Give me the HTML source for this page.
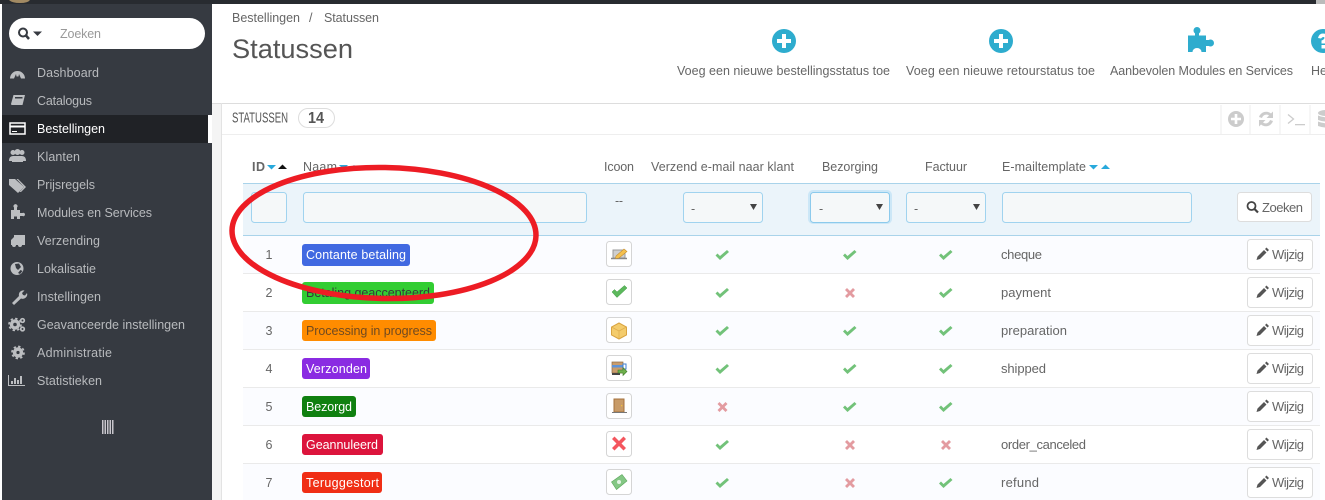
<!DOCTYPE html>
<html><head><meta charset="utf-8"><title>Statussen</title>
<style>
html,body{margin:0;padding:0;background:#fff;width:1325px;height:500px;overflow:hidden}
svg{display:block}
text{font-family:"Liberation Sans",sans-serif;font-size:12.5px;fill:#666}
.s text{fill:#b8babd}
.l text{fill:#fff;font-size:12.5px}
.b{font-size:13px}
</style></head><body>
<svg width="1325" height="500" viewBox="0 0 1325 500" xmlns="http://www.w3.org/2000/svg">
<defs>
<path id="ck" d="M-7 0.5L-5 -1.5L-2.5 1L4.500 -5L6.500 -3L-2.5 5Z" fill="#72c279"/>
<path id="xx" d="M-5 -3L-3 -5L0 -2L3 -5L5 -3L2 0L5 3L3 5L0 2L-3 5L-5 3L-2 0Z" fill="#e39ba0"/>
<g id="wz"><rect x="0.5" y="0.5" width="65" height="30" rx="3" fill="#fff" stroke="#ddd"/>
<path d="M9.500 21L10.500 17.500L17 11L19.500 13.500L13 20ZM18 10L19.500 8.500L22 11L20.500 12.500Z" fill="#555"/>
<text x="25" y="20" textLength="32" lengthAdjust="spacing" class="b" style="fill:#666">Wijzig</text></g>
<rect id="ib" x="0.5" y="0.5" width="25" height="25" rx="3" fill="#fff" stroke="#d5d5d5"/>
</defs>

<!-- top bar and sidebar -->
<rect x="0" y="0" width="1316" height="4" fill="#282b30"/>
<rect x="1316" y="0" width="9" height="4" fill="#bbb"/>
<path d="M9 0H30Q28 3 20 3Q12 3 9 0Z" fill="#a28a63"/>
<rect x="2" y="4" width="210" height="496" fill="#363a41"/>
<rect x="0" y="0" width="2" height="500" fill="#fff"/>
<rect x="0" y="0" width="2" height="4" fill="#282b30"/>

<rect x="9" y="18" width="196" height="31" rx="15.500" fill="#fff"/>
<circle cx="23" cy="32.500" r="4" fill="none" stroke="#363a41" stroke-width="2"/>
<path d="M26 35.500L29 39" stroke="#363a41" stroke-width="2.500"/>
<path d="M33 31.500H42L37.500 36Z" fill="#363a41"/>
<text x="60" y="38" textLength="41" style="fill:#999">Zoeken</text>

<rect x="2" y="115" width="206" height="28" fill="#202226"/>
<rect x="208" y="115" width="4" height="28" fill="#fff"/>

<g class="s">
<text x="37" y="77" textLength="62">Dashboard</text>
<text x="37" y="105" textLength="55">Catalogus</text>
<text x="37" y="133" textLength="68" style="fill:#fff">Bestellingen</text>
<text x="37" y="161" textLength="43">Klanten</text>
<text x="37" y="189" textLength="58">Prijsregels</text>
<text x="37" y="217" textLength="115">Modules en Services</text>
<text x="37" y="245" textLength="63">Verzending</text>
<text x="37" y="273" textLength="59">Lokalisatie</text>
<text x="37" y="301" textLength="64">Instellingen</text>
<text x="37" y="329" textLength="148">Geavanceerde instellingen</text>
<text x="37" y="357" textLength="75">Administratie</text>
<text x="37" y="385" textLength="65">Statistieken</text>
</g>

<!-- sidebar icons -->
<g fill="#bcbec1">
<path d="M10 78.500A7.500 7.500 0 1 1 25 78.500L21 78.500L19 74L18.500 76.500L16.500 76.500L16 74L14 78.500Z"/>
<path d="M13 66.500h1.500v2h-1.500zM17 65.500h1.500v2h-1.500zM21 66.500h1.500v2h-1.500z" fill="#363a41"/>
<path d="M13.500 95H25L22.500 105H11.500L11 104ZM15 97V98.500H22.500V97Z"/>
<rect x="10" y="123" width="15" height="11" fill="none" stroke="#fff" stroke-width="1.500"/>
<rect x="10" y="125.500" width="15" height="2" fill="#fff"/>
<rect x="12" y="131" width="5" height="1" fill="#fff"/>
<circle cx="13" cy="152.500" r="2.500"/><circle cx="22" cy="152.500" r="2.500"/><circle cx="17.500" cy="152" r="3"/>
<path d="M9 161Q9 156 13 156H22Q26 156 26 161H23V162H12V161Z"/>
<path d="M9 179H15L24 187L18 193L9 185Z"/>
<path d="M18 179L26 187L21 192L19.500 192L24 187L16.500 179Z"/>
<path d="M11 210H14V207.500A2 2 0 1 1 17 207.500V210H20V213H22.500A1.700 1.700 0 1 1 22.500 216H20V219H17V216.500H14V219H11Z"/>
<path d="M14 235H25V245H22A2 2 0 0 1 18 245H16A2 2 0 0 1 12 245H11V240L14 237Z"/>
<circle cx="17" cy="268.500" r="6.500"/>
<path d="M15 264L19 263.500L21 267L18 270L16 268Z" fill="#363a41"/>
<path d="M18 273L20.500 270L22.500 271L20 274Z" fill="#363a41"/>
<path d="M12 303L19 296A4.500 4.500 0 0 1 24.500 290.500L22 293L23 295L25 295.500L27 293A4.500 4.500 0 0 1 21 298.500L14 305Z"/>
<circle cx="15" cy="324.500" r="3.500" fill="none" stroke="#bcbec1" stroke-width="3.400"/>
<circle cx="15" cy="324.500" r="6" fill="none" stroke="#bcbec1" stroke-width="1.600" stroke-dasharray="2.400 2.300"/>
<circle cx="22.500" cy="320.500" r="1.800" fill="none" stroke="#bcbec1" stroke-width="1.700"/>
<circle cx="22.500" cy="329" r="1.800" fill="none" stroke="#bcbec1" stroke-width="1.700"/>
<circle cx="18" cy="352.500" r="3.400" fill="none" stroke="#bcbec1" stroke-width="3.600"/>
<circle cx="18" cy="352.500" r="6" fill="none" stroke="#bcbec1" stroke-width="1.700" stroke-dasharray="2.400 2.300"/>
<path d="M8 375H9V385H25V386H8Z"/>
<path d="M11 381h2v3h-2zM14 378h2v6h-2zM17 380h2v4h-2zM20 376h2v8h-2z"/>
</g>
<path d="M102 420h1.500v14h-1.500zM104.500 420h1.500v14h-1.500zM107 420h1.500v14h-1.500zM109.500 420h1.500v14h-1.500zM112 420h1.500v14h-1.500z" fill="#c8c5cc"/>

<!-- page background below header -->
<rect x="212" y="103" width="1113" height="397" fill="#f4f4f4"/>
<rect x="221" y="103" width="1104" height="397" fill="#fff"/>
<rect x="212" y="103" width="1113" height="1" fill="#ddd"/>
<rect x="221" y="103" width="1" height="397" fill="#e3e3e3"/>

<!-- page header -->
<text x="232" y="22" textLength="68">Bestellingen</text>
<text x="309" y="22">/</text>
<text x="324" y="22" textLength="55">Statussen</text>
<text x="232" y="58" textLength="121" lengthAdjust="spacingAndGlyphs" style="font-size:27px;fill:#555">Statussen</text>

<circle cx="784" cy="41" r="12" fill="#2eacce"/>
<path d="M782 34h4v5h5v4h-5v5h-4v-5h-5v-4h5z" fill="#fff"/>
<circle cx="1001" cy="41" r="12" fill="#2eacce"/>
<path d="M999 34h4v5h5v4h-5v5h-4v-5h-5v-4h5z" fill="#fff"/>
<g fill="#2eacce">
<path d="M1188 35.500H1195V30H1199V35.500H1206V40H1209V46H1206V52H1201.500A4.500 4 0 0 0 1192.500 52H1188Z"/>
<circle cx="1197" cy="30.500" r="3.500"/><circle cx="1210.500" cy="43" r="3.500"/>
</g>
<circle cx="1323" cy="41" r="12" fill="#2eacce"/>
<path d="M1318 38Q1319 33.500 1323 33.500Q1328 33.500 1328 37.500Q1328 40 1325 41.500V43.500H1321.500V40.500Q1324.500 39.500 1324.500 37.500Q1323 36 1321 38.500ZM1321.500 45H1325V48.500H1321.500Z" fill="#fff"/>
<text x="677" y="75" textLength="213">Voeg een nieuwe bestellingsstatus toe</text>
<text x="906" y="75" textLength="189">Voeg een nieuwe retourstatus toe</text>
<text x="1110" y="75" textLength="183">Aanbevolen Modules en Services</text>
<text x="1311" y="75" textLength="16">He</text>

<!-- panel header -->
<text x="232" y="122.500" textLength="56" lengthAdjust="spacingAndGlyphs" style="font-size:14.500px;fill:#555">STATUSSEN</text>
<rect x="298.500" y="108.500" width="36" height="19" rx="9.500" fill="#fff" stroke="#ddd"/>
<text x="308" y="123" textLength="16" lengthAdjust="spacingAndGlyphs" style="font-size:15.500px;font-weight:bold;fill:#555">14</text>
<rect x="222" y="134" width="1103" height="1" fill="#eee"/>
<path d="M1221 105v29M1250 105v29M1280 105v29M1310 105v29" stroke="#eee" stroke-width="1"/>
<circle cx="1236" cy="119" r="8" fill="#ccc"/>
<path d="M1234.700 114h2.600v3.700h3.700v2.600h-3.700v3.700h-2.600v-3.700h-3.700v-2.600h3.700z" fill="#fff"/>
<path d="M1259 117A7.500 7.500 0 0 1 1271 113.500L1273 111.500V118H1266.500L1269 115.500A4.500 4.500 0 0 0 1262 118ZM1273 121A7.500 7.500 0 0 1 1261 124.500L1259 126.500V120H1265.500L1263 122.500A4.500 4.500 0 0 0 1270 120Z" fill="#ccc"/>
<path d="M1288 114.500L1293.500 119L1288 123.500" fill="none" stroke="#ccc" stroke-width="1.300"/>
<rect x="1295" y="124" width="10" height="1.300" fill="#ccc"/>
<ellipse cx="1326" cy="113" rx="8" ry="3" fill="#ccc"/>
<path d="M1318 115.500Q1326 119 1334 115.500V120Q1326 123 1318 120ZM1318 121.500Q1326 125 1334 121.500V126Q1326 129 1318 126Z" fill="#ccc"/>

<!-- table header -->
<text x="252" y="171" textLength="13" style="font-weight:bold;fill:#666">ID</text>
<path d="M267 165h9l-4.500 4.500z" fill="#28a9dc"/>
<path d="M278 169h9l-4.500-4.500z" fill="#111"/>
<text x="303" y="171" textLength="34">Naam</text>
<path d="M339 165h9l-4.500 4.500z" fill="#28a9dc"/>
<path d="M350 169h8l-4-4z" fill="#28a9dc"/>
<text x="604" y="171" textLength="30">Icoon</text>
<text x="651" y="171" textLength="143">Verzend e-mail naar klant</text>
<text x="822" y="171" textLength="56">Bezorging</text>
<text x="925" y="171" textLength="42">Factuur</text>
<text x="1002" y="171" textLength="84">E-mailtemplate</text>
<path d="M1089 165h9l-4.500 4.500z" fill="#28a9dc"/>
<path d="M1101 169h9l-4.500-4.500z" fill="#28a9dc"/>

<!-- filter row -->
<rect x="243" y="183" width="1077" height="53" fill="#ebf4fa"/>
<rect x="243" y="183" width="1077" height="1" fill="#a9d3ea"/>
<rect x="243" y="235" width="1077" height="1" fill="#a9d3ea"/>
<g fill="#f5f8f9" stroke="#a0d3ef">
<rect x="251.500" y="192.500" width="35" height="30" rx="3"/>
<rect x="303.500" y="192.500" width="283" height="30" rx="3"/>
<rect x="683.500" y="192.500" width="79" height="30" rx="3"/>
<rect x="906.500" y="192.500" width="79" height="30" rx="3"/>
<rect x="1002.500" y="192.500" width="189" height="30" rx="3"/>
</g>
<rect x="808" y="190" width="84" height="34" rx="5" fill="#bfe1f5" opacity=".7"/>
<rect x="810.500" y="192.500" width="79" height="30" rx="3" fill="#f5f8f9" stroke="#8ccaec"/>
<text x="615" y="205" textLength="8">--</text>
<text x="691" y="213">-</text><text x="819" y="213">-</text><text x="914" y="213">-</text>
<path d="M750 204h7l-3.500 6zM876 204h7l-3.500 6zM973 204h7l-3.500 6z" fill="#444"/>
<rect x="1237.500" y="192.500" width="74" height="29" rx="3" fill="#fff" stroke="#ddd"/>
<circle cx="1251.500" cy="206" r="4" fill="none" stroke="#444" stroke-width="1.800"/>
<path d="M1254.500 209L1258 212.500" stroke="#444" stroke-width="2.200"/>
<text x="1262" y="212" textLength="41" class="b">Zoeken</text>

<!-- rows -->
<rect x="243" y="236" width="1077" height="37" fill="#fbfcff"/>
<rect x="243" y="312" width="1077" height="37" fill="#fbfcff"/>
<rect x="243" y="388" width="1077" height="37" fill="#fbfcff"/>
<rect x="243" y="464" width="1077" height="36" fill="#fbfcff"/>
<path d="M243 273.500H1320M243 311.500H1320M243 349.500H1320M243 387.500H1320M243 425.500H1320M243 463.500H1320" stroke="#eaeaea"/>

<g text-anchor="middle">
<text x="269" y="259">1</text><text x="269" y="297">2</text><text x="269" y="335">3</text><text x="269" y="373">4</text><text x="269" y="411">5</text><text x="269" y="449">6</text><text x="269" y="487">7</text>
</g>

<rect x="302" y="244" width="108" height="22" rx="3" fill="#4169e1"/>
<rect x="302" y="282" width="132" height="22" rx="3" fill="#32cd32"/>
<rect x="302" y="320" width="134" height="21" rx="3" fill="#ff8c00"/>
<rect x="302" y="358" width="68" height="21" rx="3" fill="#8a2be2"/>
<rect x="302" y="396" width="54" height="21" rx="3" fill="#108010"/>
<rect x="302" y="434" width="81" height="21" rx="3" fill="#dc143c"/>
<rect x="302" y="472" width="80" height="21" rx="3" fill="#f02e15"/>
<g class="l">
<text x="306" y="259" textLength="100">Contante betaling</text>
<text x="306" y="297" textLength="124" style="fill:#383838">Betaling geaccepteerd</text>
<text x="306" y="335" textLength="126" style="fill:#704a20">Processing in progress</text>
<text x="306" y="373" textLength="61">Verzonden</text>
<text x="306" y="411" textLength="46">Bezorgd</text>
<text x="306" y="449" textLength="72">Geannuleerd</text>
<text x="306" y="487" textLength="73">Teruggestort</text>
</g>

<!-- status icons -->
<use href="#ib" x="606" y="241"/><use href="#ib" x="606" y="279"/><use href="#ib" x="606" y="317"/><use href="#ib" x="606" y="355"/><use href="#ib" x="606" y="393"/><use href="#ib" x="606" y="431"/><use href="#ib" x="606" y="469"/>
<path d="M613 250H625V258H613Z" fill="#cfcfcf" stroke="#999"/><path d="M611 258.500H627" stroke="#888" stroke-width="1.500"/>
<path d="M616 256L624 249L627 251.500L619 258L615.500 258.500Z" fill="#f4c04e" stroke="#c98f2b" stroke-width=".6"/>
<path d="M612 292L614.500 289.500L617 292L624.500 285.500L627 288L617 297.500Z" fill="#5cb85c" stroke="#3e9a43" stroke-width=".5"/>
<path d="M619 323L626.500 327V335L619 339L611.500 335V327Z" fill="#f4cc6c" stroke="#d9a441"/><path d="M611.500 327L619 331L626.500 327M619 331V339" fill="none" stroke="#e0ae4e" stroke-width=".8"/>
<rect x="612" y="362" width="11" height="11" fill="#c99c6c" stroke="#8a6a44" stroke-width=".7"/><rect x="612" y="365" width="11" height="2.500" fill="#5e93d8"/>
<path d="M623 364H626V369H623Z" fill="#fff" stroke="#3f7fd1"/><rect x="612" y="373" width="8" height="2" fill="#444"/>
<path d="M618 370H623V367.500L627 371.500L623 375.500V373H618Z" fill="#6fb04c" stroke="#3d7b2a" stroke-width=".6"/>
<rect x="614" y="399" width="10" height="13" fill="#c89b68" stroke="#a5713d"/><rect x="621" y="405" width="1.300" height="1.300" fill="#f0c040"/><path d="M612 412.500H627" stroke="#777"/>
<path d="M612 439L614.500 436.500L619 441L623.500 436.500L626 439L621.500 443.500L626 448L623.500 450.500L619 446L614.500 450.500L612 448L616.500 443.500Z" fill="#f4565e"/>
<path d="M611.500 482L622 474.500L627 481L616.500 489.500Z" fill="#84c784" stroke="#5ba65b" stroke-width=".6"/><circle cx="619" cy="482" r="2" fill="#e3f3e3"/>

<!-- check columns -->
<use href="#ck" x="722.500" y="255"/><use href="#ck" x="850" y="255"/><use href="#ck" x="946" y="255"/>
<use href="#ck" x="722.500" y="293"/><use href="#xx" x="850" y="293"/><use href="#ck" x="946" y="293"/>
<use href="#ck" x="722.500" y="331"/><use href="#ck" x="850" y="331"/><use href="#ck" x="946" y="331"/>
<use href="#ck" x="722.500" y="369"/><use href="#ck" x="850" y="369"/><use href="#ck" x="946" y="369"/>
<use href="#xx" x="722.500" y="407"/><use href="#ck" x="850" y="407"/><use href="#ck" x="946" y="407"/>
<use href="#ck" x="722.500" y="445"/><use href="#xx" x="850" y="445"/><use href="#xx" x="946" y="445"/>
<use href="#ck" x="722.500" y="483"/><use href="#xx" x="850" y="483"/><use href="#ck" x="946" y="483"/>

<text x="1001" y="259" textLength="41" class="b">cheque</text>
<text x="1001" y="297" textLength="50" class="b">payment</text>
<text x="1001" y="335" textLength="66" class="b">preparation</text>
<text x="1001" y="373" textLength="45" class="b">shipped</text>
<text x="1001" y="449" textLength="85" class="b">order_canceled</text>
<text x="1001" y="487" textLength="38" class="b">refund</text>

<use href="#wz" x="1247" y="239"/><use href="#wz" x="1247" y="277"/><use href="#wz" x="1247" y="315"/><use href="#wz" x="1247" y="353"/><use href="#wz" x="1247" y="391"/><use href="#wz" x="1247" y="429"/><use href="#wz" x="1247" y="467"/>

<!-- red annotation ellipse -->
<ellipse cx="384" cy="233" rx="152" ry="65.500" fill="none" stroke="#ed1c24" stroke-width="5.500" transform="rotate(1 384 233)"/>
</svg>
</body></html>
